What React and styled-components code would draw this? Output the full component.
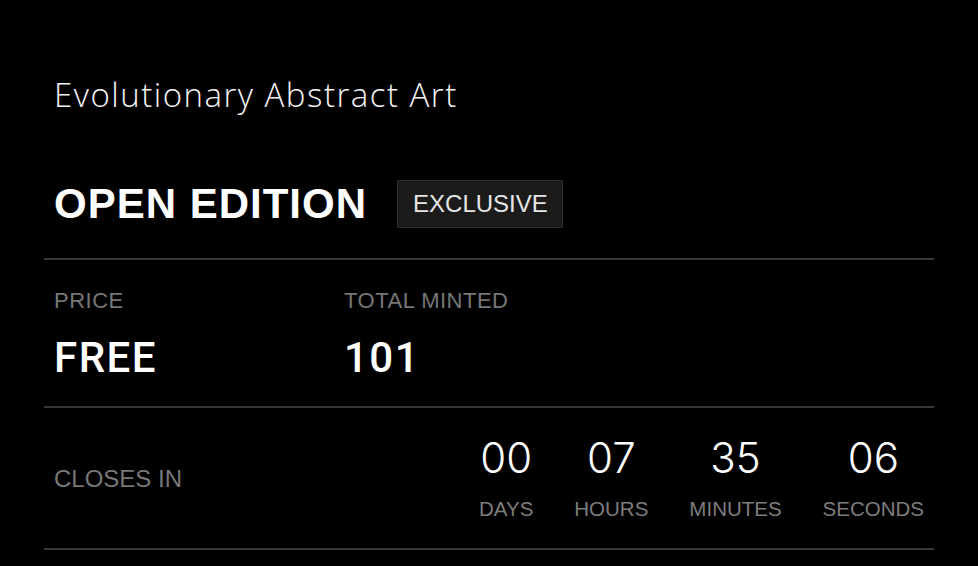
import React from "react";
import styled, { createGlobalStyle } from "styled-components";

const Global = createGlobalStyle`
  html, body { margin: 0; padding: 0; background: #000; }
  body { font-family: "Liberation Sans", Arial, sans-serif; color: #fff; }
  * { box-sizing: border-box; }
`;

const Page = styled.div`
  width: 978px;
  min-height: 566px;
  background: #000;
  padding: 75px 44px 0 44px;
`;

const Header = styled.header`
  display: flex;
  flex-direction: column;
  padding: 0 10px;
`;

const Title = styled.h1`
  margin: 0;
  font-family: "Open Sans", "Liberation Sans", sans-serif;
  font-weight: 300;
  font-size: 33px;
  line-height: 40px;
  letter-spacing: 1.5px;
  color: #f4f4f4;
`;

const TitleRow = styled.div`
  display: flex;
  align-items: center;
  gap: 30px;
  margin-top: 65px;
  height: 48px;
`;

const Heading = styled.h2`
  margin: 0;
  font-family: "Liberation Sans", Arial, sans-serif;
  font-weight: 700;
  font-size: 42px;
  line-height: 48px;
  letter-spacing: 1px;
  color: #fff;
`;

const Badge = styled.span`
  display: inline-flex;
  align-items: center;
  height: 48px;
  padding: 0 14px 0 15px;
  background: #1b1b1b;
  border: 1px solid #2c2c2c;
  font-size: 24px;
  color: #e6e6e6;
`;

const Section = styled.section`
  border-top: 2px solid #383838;
  margin-top: ${(p) => p.$gap || 0}px;
  padding: ${(p) => p.$pad};
`;

const LastRule = styled.div`
  border-top: 2px solid #383838;
`;

const StatsGrid = styled.div`
  display: grid;
  grid-template-columns: 290px 1fr;
`;

const Stat = styled.div`
  display: flex;
  flex-direction: column;
  gap: 20px;
`;

const Label = styled.span`
  font-size: 22px;
  line-height: 26px;
  letter-spacing: 0.5px;
  color: #777;
`;

const Value = styled.span`
  font-family: Roboto, "Liberation Sans", sans-serif;
  font-weight: 500;
  font-size: 42px;
  line-height: 48px;
  color: #fff;
  letter-spacing: 1.5px;
`;

const CountRow = styled.div`
  display: flex;
  align-items: center;
  justify-content: space-between;
`;

const ClosesLabel = styled.span`
  font-size: 24px;
  line-height: 28px;
  color: #777;
  margin-top: 2px;
`;

const Units = styled.div`
  display: flex;
  gap: 41px;
`;

const Unit = styled.div`
  display: flex;
  flex-direction: column;
  align-items: center;
  gap: 15px;
`;

const Number = styled.span`
  font-family: Inter, "Liberation Sans", sans-serif;
  font-weight: 300;
  font-size: 42px;
  line-height: 48px;
  color: #fff;
`;

const UnitLabel = styled.span`
  font-size: 20.5px;
  line-height: 24px;
  color: #7d7d7d;
`;

const countdown = [
  { value: "00", label: "DAYS" },
  { value: "07", label: "HOURS" },
  { value: "35", label: "MINUTES" },
  { value: "06", label: "SECONDS" },
];

export default function App() {
  return (
    <>
      <Global />
      <Page>
        <Header>
          <Title>Evolutionary Abstract Art</Title>
          <TitleRow>
            <Heading>OPEN EDITION</Heading>
            <Badge>EXCLUSIVE</Badge>
          </TitleRow>
        </Header>
        <Section $gap={30} $pad="28px 10px 24px">
          <StatsGrid>
            <Stat>
              <Label>PRICE</Label>
              <Value>FREE</Value>
            </Stat>
            <Stat>
              <Label>TOTAL MINTED</Label>
              <Value>101</Value>
            </Stat>
          </StatsGrid>
        </Section>
        <Section $pad="26px 10px 27px">
          <CountRow>
            <ClosesLabel>CLOSES IN</ClosesLabel>
            <Units>
              {countdown.map((u) => (
                <Unit key={u.label}>
                  <Number>{u.value}</Number>
                  <UnitLabel>{u.label}</UnitLabel>
                </Unit>
              ))}
            </Units>
          </CountRow>
        </Section>
        <LastRule />
      </Page>
    </>
  );
}
